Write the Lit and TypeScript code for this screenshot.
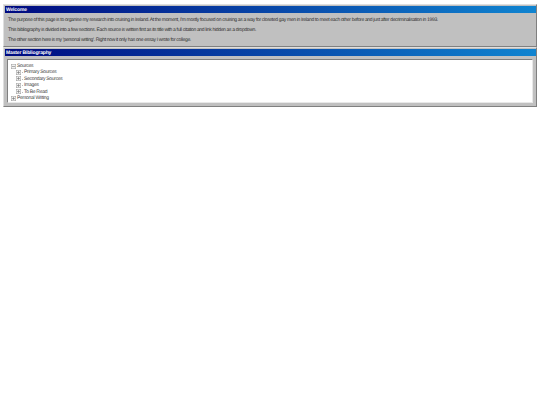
import { LitElement, html, css, svg } from "lit";
import { customElement } from "lit/decorators.js";

const expander = (plus: boolean) => html`<svg class="box" viewBox="0 0 10 10" aria-hidden="true">
  <rect x="0.5" y="0.5" width="9" height="9" fill="#f2f2f2" stroke="#999"></rect>
  <path d="M2 5h6" stroke="#666"></path>
  ${plus ? svg`<path d="M5 2v6" stroke="#666"></path>` : ""}
</svg>`;

@customElement("app-root")
export class AppRoot extends LitElement {
  static styles = css`
    :host { display: block; width: 540px; height: 405px; background: #fff; font-family: "Liberation Sans", Arial, sans-serif; color: #303030; overflow: hidden; text-rendering: geometricPrecision; }
    .page { padding: 4px 3px 0 3px; display: flex; flex-direction: column; }
    .win { background: #c0c0c0; border: 1px solid; border-color: #dfdfdf #808080 #808080 #dfdfdf; padding: 1px 0 0 1px; }
    .title { height: 7px; line-height: 8px; overflow: hidden; background: linear-gradient(90deg, #000a80, #1084d0); color: #fff; font-size: 5px; letter-spacing: -0.15px; font-weight: bold; padding-left: 1px; }
    .body { padding: 5px 3px 1px; font-size: 5px; line-height: 5px; height: 27px; }
    .body p { margin: 0 0 5px; white-space: nowrap; letter-spacing: -0.335px; }
    .tree-wrap { padding: 3px 3px 3px 2px; }
    .tree { background: #fff; border: 1px solid; border-color: #808080 #e8e8e8 #e8e8e8 #808080; padding: 3px 0 0 3px; font-size: 5px; letter-spacing: -0.3px; height: 44px; box-sizing: border-box; }
    .row { height: 6.4px; line-height: 6.4px; display: flex; align-items: center; gap: 1px; white-space: nowrap; color: #444; }
    .row.sub { padding-left: 5px; }
    .box { width: 5px; height: 5px; flex: none; display: block; }
    .dash { width: 1px; height: 0.5px; background: #bbb; flex: none; }
  `;

  render() {
    return html`<div class="page">
      <section class="win">
        <div class="title">Welcome</div>
        <div class="body">
          <p>The purpose of this page is to organise my research into cruising in Ireland. At the moment, I'm mostly focused on cruising as a way for closeted gay men in Ireland to meet each other before and just after decriminalisation in 1993.</p>
          <p>This bibliography is divided into a few sections. Each source is written first as its title with a full citation and link hidden as a dropdown.</p>
          <p>The other section here is my 'personal writing'. Right now it only has one essay I wrote for college.</p>
        </div>
      </section>
      <section class="win">
        <div class="title">Master Bibliography</div>
        <div class="tree-wrap">
          <div class="tree">
            <div class="row">${expander(false)}<span>Sources</span></div>
            ${["Primary Sources", "Secondary Sources", "Images", "To Be Read"].map(
              (t) => html`<div class="row sub">${expander(true)}<span class="dash"></span><span>${t}</span></div>`
            )}
            <div class="row">${expander(true)}<span>Personal Writing</span></div>
          </div>
        </div>
      </section>
    </div>`;
  }
}
